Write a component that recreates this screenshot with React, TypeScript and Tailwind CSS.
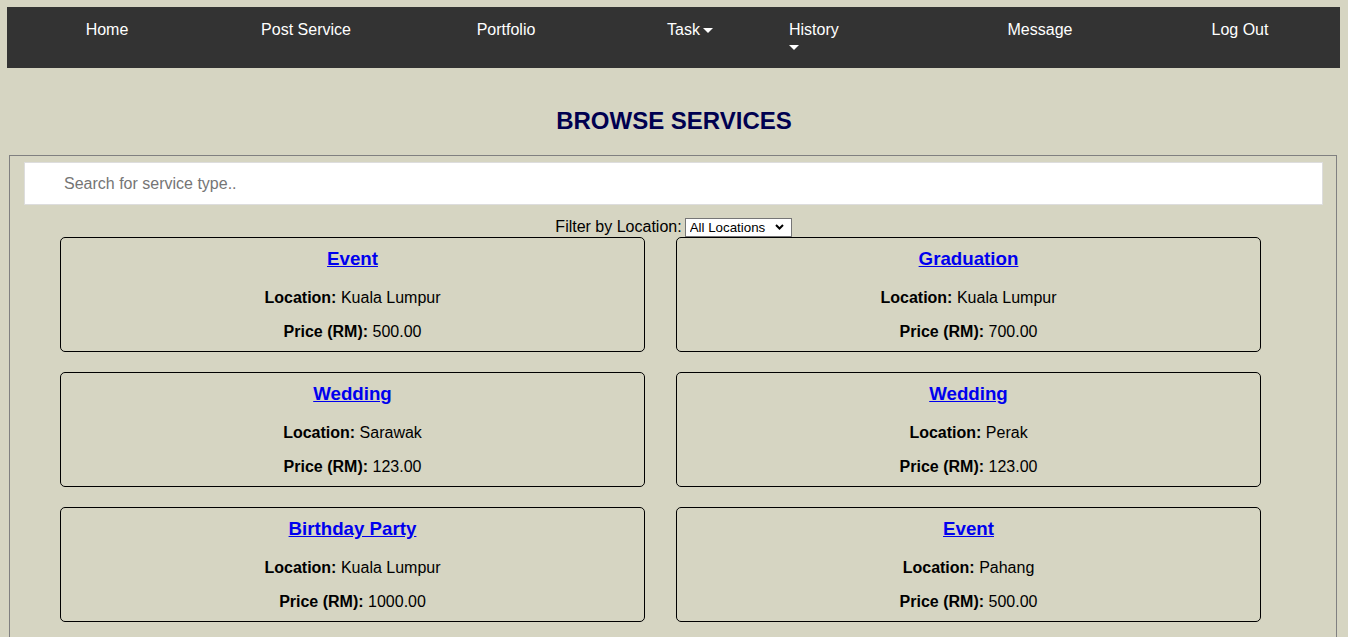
import React from 'react';

type Service = {
  title: string;
  location: string;
  price: string;
};

const services: Service[] = [
  { title: 'Event', location: 'Kuala Lumpur', price: '500.00' },
  { title: 'Graduation', location: 'Kuala Lumpur', price: '700.00' },
  { title: 'Wedding', location: 'Sarawak', price: '123.00' },
  { title: 'Wedding', location: 'Perak', price: '123.00' },
  { title: 'Birthday Party', location: 'Kuala Lumpur', price: '1000.00' },
  { title: 'Event', location: 'Pahang', price: '500.00' },
];

function Caret({ className = '' }: { className?: string }) {
  return (
    <svg width="10" height="5" viewBox="0 0 10 5" className={className}>
      <path d="M0 0 L10 0 L5 5 Z" fill="#fff" />
    </svg>
  );
}

function NavBar() {
  return (
    <nav className="ml-[7px] mr-[8px] mt-[7px] h-[61px] bg-[#333333] text-white text-[16px] leading-[18px] flex items-start pt-[14px]">
      <a href="#" className="w-[200px] text-center">Home</a>
      <a href="#" className="w-[198px] text-center">Post Service</a>
      <a href="#" className="w-[202px] text-center">Portfolio</a>
      <a href="#" className="w-[182px] pl-[60px] flex items-center">
        Task
        <Caret className="ml-[3px] mt-[1px]" />
      </a>
      <a href="#" className="w-[60px] flex flex-col items-start">
        History
        <Caret className="mt-[6px]" />
      </a>
      <a href="#" className="ml-[91px] w-[200px] text-center">Message</a>
      <a href="#" className="w-[200px] text-center">Log Out</a>
    </nav>
  );
}

function ServiceCard({ item }: { item: Service }) {
  return (
    <div className="h-[115px] border border-black rounded-[5px] pt-[10px] text-center text-black text-[16px]">
      <h3 className="text-[18.72px] leading-[22px] font-bold">
        <a href="#" className="text-[#0000ee] underline">{item.title}</a>
      </h3>
      <p className="mt-[19px] leading-[18px]">
        <b>Location:</b> {item.location}
      </p>
      <p className="mt-[16px] leading-[18px]">
        <b>Price (RM):</b> {item.price}
      </p>
    </div>
  );
}

export default function App() {
  return (
    <div className="min-h-screen bg-[#d6d5c2] font-['Liberation_Sans',Arial,sans-serif] overflow-hidden">
      <NavBar />

      <h2 className="mt-[39px] text-center text-[24px] leading-[28px] font-bold text-[#000050]">
        BROWSE SERVICES
      </h2>

      <div className="ml-[9px] mt-[20px] w-[1328px] h-[500px] border border-[#808080] pt-[6px] pl-[14px] pr-[13px]">
        <input
          type="text"
          placeholder="Search for service type.."
          className="block w-full h-[43px] bg-white border border-[#dddddd] pl-[39px] text-[16px] text-black placeholder:text-[#757575] outline-none"
        />

        <div className="mt-[11px] mb-[1px] flex justify-center items-center text-[16px] leading-[19px] text-black">
          <span>Filter by Location:</span>
          <div className="relative ml-[3px] translate-y-[1px]">
            <select className="appearance-none w-[107px] h-[19px] bg-white border border-[#767676] pl-[4px] text-[13.33px] leading-[17px] text-black">
              <option>All Locations</option>
              <option>Kuala Lumpur</option>
              <option>Sarawak</option>
              <option>Perak</option>
              <option>Pahang</option>
            </select>
            <svg
              width="9"
              height="6"
              viewBox="0 0 9 6"
              className="absolute right-[8px] top-[7px] pointer-events-none"
            >
              <path d="M1 1 L4.5 4.5 L8 1" stroke="#000" strokeWidth="2" fill="none" />
            </svg>
          </div>
        </div>

        <div className="ml-[36px] grid grid-cols-[585px_585px] gap-x-[31px] gap-y-[20px]">
          {services.map((s, i) => (
            <ServiceCard key={i} item={s} />
          ))}
        </div>
      </div>
    </div>
  );
}
